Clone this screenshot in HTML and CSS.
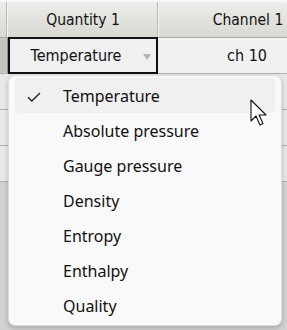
FILE: index.html
```html
<!DOCTYPE html>
<html lang="en">
<head>
  <meta charset="UTF-8" />
  <title>Quantity picker</title>
  <link rel="stylesheet" href="styles.css">
</head>
<body>

  <div class="grid">
    <div class="hrow">
      <div class="hcell stub"></div>
      <div class="hcell qty">Quantity 1</div>
      <div class="hcell chan">Channel 1</div>
    </div>
    <div class="row">
      <div class="stub dark"></div>
      <div class="cell qty sel">Temperature<span class="arrow"></span></div>
      <div class="cell chan">ch 10</div>
    </div>
    <div class="row empty"></div>
    <div class="row empty"></div>
    <div class="row empty"></div>
  </div>

  <div class="menu">
    <div class="item checked">
      <svg class="check" width="14" height="10" viewBox="0 0 14 10">
        <path d="M1 5.2 L4.8 9 L13 1" fill="none" stroke="#222" stroke-width="1.3" />
      </svg>
      Temperature
    </div>
    <div class="item">Absolute pressure</div>
    <div class="item">Gauge pressure</div>
    <div class="item">Density</div>
    <div class="item">Entropy</div>
    <div class="item">Enthalpy</div>
    <div class="item">Quality</div>
  </div>

  <!-- mouse pointer over the menu -->
  <svg class="cursor" width="20" height="28" viewBox="0 0 20 28">
    <path d="M1 1 L1 22 L6 17 L10 26 L13 24.6 L9 16 L16 16 Z" fill="#fff" stroke="#111" stroke-width="1.1" stroke-linejoin="round" />
  </svg>

</body>
</html>
```

FILE: styles.css
```css
body {
  margin: 0;
  width: 287px;
  height: 330px;
  overflow: hidden;
  position: relative;
  background: #d2d2d2;
  font-family: "DejaVu Sans", sans-serif;
  font-stretch: condensed;
  color: #111;
}
.grid {
  width: 287px;
  overflow: hidden;
}
.hrow {
  display: flex;
  height: 35px;
  border-top: 2px solid #f6f6f6;
  background: linear-gradient(#ecece9, #d9d8d3);
  border-bottom: 1px solid #a9a8a2;
  box-sizing: content-box;
}
.hcell {
  display: flex;
  align-items: center;
  justify-content: center;
  font-size: 15.5px;
  border-right: 1px solid #f4f4f2;
  box-shadow: inset -1px 0 0 #b8b7b1;
  flex: none;
}
.stub {
  width: 7px;
  flex: none;
}
.qty {
  width: 150px;
}
.chan {
  width: 178px;
}
.row {
  display: flex;
  height: 36px;
  background: #e8e8e8;
  border-bottom: 1px solid #b0b0b0;
  box-sizing: border-box;
}
.dark {
  background: #c6c6c0;
  border-right: 1px solid #8f8f8a;
}
.cell {
  display: flex;
  align-items: center;
  justify-content: center;
  font-size: 16px;
  background: #f1f1f1;
  flex: none;
}
.sel {
  box-sizing: border-box;
  border: 2px solid #111;
  background: #eef0f2;
  position: relative;
  padding-right: 14px;
  margin-top: -1px;
  height: 37px;
}
.arrow {
  position: absolute;
  right: 5px;
  top: 15px;
  border-left: 4px solid transparent;
  border-right: 4px solid transparent;
  border-top: 6px solid #b2b2b2;
}
.menu {
  position: absolute;
  left: 8px;
  top: 75px;
  width: 274px;
  box-sizing: border-box;
  padding: 2px 6px;
  background: #f9f9f9;
  border: 1px solid #dcdcdc;
  border-radius: 7px;
  box-shadow: 0 2px 5px rgba(0, 0, 0, 0.22);
  font-family: "Noto Sans", sans-serif;
  font-stretch: normal;
  font-size: 16px;
  color: #111;
}
.item {
  height: 35px;
  display: flex;
  align-items: center;
  padding-left: 48px;
  border-radius: 4px;
  position: relative;
}
.item.checked {
  background: #f0f0f0;
}
.check {
  position: absolute;
  left: 12px;
  top: 14px;
}
.cursor {
  position: absolute;
  left: 250px;
  top: 99px;
}
```
